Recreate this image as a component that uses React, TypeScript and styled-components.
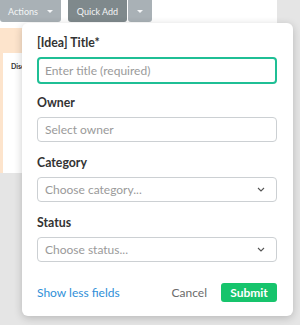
import React from "react";
import styled, { createGlobalStyle } from "styled-components";

const Global = createGlobalStyle`
  html, body {
    margin: 0;
    padding: 0;
    background: #e5e5e5;
    font-family: Lato, "Open Sans", sans-serif;
  }
  * { box-sizing: border-box; }
`;

const Page = styled.div`
  position: relative;
  width: 300px;
  height: 325px;
  overflow: hidden;
  background: #e5e5e5;
`;

const Board = styled.div`
  width: 277px;
  height: 173px;
  background: #fff;
  display: flex;
  flex-direction: column;
`;

const Toolbar = styled.div`
  display: flex;
  height: 22px;
  gap: 7px;
  margin-bottom: 6px;
`;

const ToolGroup = styled.div`
  display: flex;
  gap: 1px;
`;

const ToolButton = styled.div<{ $dark?: boolean; $w: number }>`
  width: ${(p) => p.$w}px;
  height: 22px;
  background: ${(p) => (p.$dark ? "#7f898c" : "#a9b1b6")};
  color: #f4f6f7;
  font-size: 9px;
  display: flex;
  align-items: center;
  justify-content: center;
  gap: 9px;
  border-radius: 0 0 3px 3px;
`;

const Caret = styled.span`
  width: 0;
  height: 0;
  border-left: 3px solid transparent;
  border-right: 3px solid transparent;
  border-top: 3px solid #f4f6f7;
`;

const Lane = styled.div`
  flex: 1;
  background: #fde4cc;
  padding: 25px 0 0 3px;
  display: flex;
`;

const Card = styled.div`
  flex: 1;
  background: #fff;
  padding: 9px 8px;
  font-size: 7px;
  font-weight: 700;
  color: #333;
`;

const Popover = styled.div`
  position: absolute;
  left: 22px;
  top: 23px;
  width: 271px;
  background: #fff;
  border-radius: 6px;
  box-shadow: 0 2px 8px rgba(0, 0, 0, 0.2);
  padding: 12px 16px 14px 15px;
  display: flex;
  flex-direction: column;
`;

const Field = styled.div`
  display: flex;
  flex-direction: column;
  gap: 6px;
  margin-bottom: 13px;
`;

const Label = styled.div`
  font-size: 12.3px;
  line-height: 16px;
  font-weight: 700;
  color: #333;
`;

const Input = styled.div<{ $focus?: boolean }>`
  height: ${(p) => (p.$focus ? 27 : 25)}px;
  margin-bottom: ${(p) => (p.$focus ? -2 : 0)}px;
  border: ${(p) => (p.$focus ? "2px solid #1fbf95" : "1px solid #ccd0d3")};
  border-radius: 4px;
  padding: 0 ${(p) => (p.$focus ? 6 : 7)}px;
  display: flex;
  align-items: center;
  justify-content: space-between;
  font-size: 12px;
  color: #9a9a9a;
`;

const Footer = styled.div`
  display: flex;
  align-items: center;
  margin-top: 8px;
`;

const LinkText = styled.span`
  font-size: 12px;
  color: #2f8fd8;
  flex: 1;
`;

const Cancel = styled.span`
  font-size: 12px;
  color: #6b6b6b;
  margin-right: 14px;
`;

const Submit = styled.div`
  width: 56px;
  height: 19px;
  background: #16c46c;
  color: #fff;
  font-size: 12px;
  font-weight: 700;
  border-radius: 3px;
  display: flex;
  align-items: center;
  justify-content: center;
`;

const Chevron = () => (
  <svg width="8" height="5" viewBox="0 0 8 5" style={{ marginRight: 4 }}>
    <path d="M1 1 L4 4 L7 1" fill="none" stroke="#555" strokeWidth="1.1" />
  </svg>
);

export default function App() {
  return (
    <Page>
      <Global />
      <Board>
        <Toolbar>
          <ToolButton $w={61}>
            Actions <Caret />
          </ToolButton>
          <ToolGroup>
            <ToolButton $dark $w={59}>Quick Add</ToolButton>
            <ToolButton $w={24}>
              <Caret />
            </ToolButton>
          </ToolGroup>
        </Toolbar>
        <Lane>
          <Card>Discover</Card>
        </Lane>
      </Board>
      <Popover>
        <Field>
          <Label>[Idea] Title*</Label>
          <Input $focus>Enter title (required)</Input>
        </Field>
        <Field>
          <Label>Owner</Label>
          <Input>Select owner</Input>
        </Field>
        <Field>
          <Label>Category</Label>
          <Input>
            Choose category...
            <Chevron />
          </Input>
        </Field>
        <Field>
          <Label>Status</Label>
          <Input>
            Choose status...
            <Chevron />
          </Input>
        </Field>
        <Footer>
          <LinkText>Show less fields</LinkText>
          <Cancel>Cancel</Cancel>
          <Submit>Submit</Submit>
        </Footer>
      </Popover>
    </Page>
  );
}
